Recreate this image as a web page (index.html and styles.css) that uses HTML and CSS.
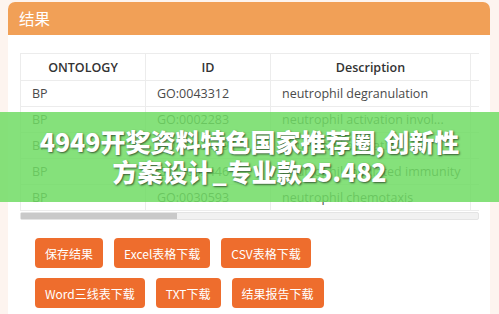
FILE: index.html
```html
<!DOCTYPE html>
<html lang="zh-CN">
<head>
    <meta charset="UTF-8">
    <title>结果</title>
    <link rel="stylesheet" href="styles.css">
</head>
<body>
    <div class="card">
        <div class="card-head">结果</div>
        <div class="card-body">
            <div class="table-wrap">
                <table class="result">
                    <colgroup>
                        <col class="c-onto">
                        <col class="c-id">
                        <col class="c-desc">
                        <col class="c-more">
                        <col class="c-more">
                        <col class="c-more">
                    </colgroup>
                    <thead>
                        <tr>
                            <th>ONTOLOGY</th>
                            <th>ID</th>
                            <th>Description</th>
                            <th></th>
                            <th></th>
                            <th></th>
                        </tr>
                    </thead>
                    <tbody>
                        <tr><td>BP</td><td>GO:0043312</td><td>neutrophil degranulation</td><td></td><td></td><td></td></tr>
                        <tr><td>BP</td><td>GO:0002283</td><td>neutrophil activation invol...</td><td></td><td></td><td></td></tr>
                        <tr><td>BP</td><td>GO:0042119</td><td>neutrophil activation</td><td></td><td></td><td></td></tr>
                        <tr><td>BP</td><td>GO:0002446</td><td>neutrophil mediated immunity</td><td></td><td></td><td></td></tr>
                        <tr><td>BP</td><td>GO:0030593</td><td>neutrophil chemotaxis</td><td></td><td></td><td></td></tr>
                    </tbody>
                </table>
            </div>
            <div class="scrollbar"><div class="thumb"></div></div>
            <div class="actions">
                <button class="btn">保存结果</button>
                <button class="btn">Excel表格下载</button>
                <button class="btn">CSV表格下载</button>
            </div>
            <div class="actions">
                <button class="btn">Word三线表下载</button>
                <button class="btn">TXT下载</button>
                <button class="btn">结果报告下载</button>
            </div>
        </div>
    </div>
    <div class="banner">
        <div class="banner-text">4949开奖资料特色国家推荐圈,创新性<br>方案设计_专业款25.482</div>
    </div>
</body>
</html>
```

FILE: styles.css
```css
body {
    margin: 0;
    padding: 2px 9px 0 8px;
    background: #fdf4ef;
    font-family: "Open Sans", "Noto Sans CJK SC", sans-serif;
    height: 312px;
    overflow: hidden;
}
.card {
    background: #fff;
    border-radius: 7px 7px 0 0;
    height: 312px;
}
.card-head {
    height: 33px;
    line-height: 32px;
    padding-left: 11px;
    background: #f1a057;
    color: #fff;
    font-family: "Noto Sans CJK SC", sans-serif;
    font-size: 15.5px;
    border-radius: 7px 7px 0 0;
}
.card-body {
    padding: 18px 11px 0 12px;
}
.table-wrap {
    overflow: hidden;
}
.result {
    border-collapse: collapse;
    table-layout: fixed;
    width: 1350px;
    font-size: 12.5px;
    color: #4a4a4a;
}
.c-onto { width: 125px; }
.c-id { width: 125px; }
.c-desc { width: 200px; }
.c-more { width: 300px; }
.result th,
.result td {
    border: 1px solid #ececec;
    height: 25px;
    padding: 0 11px;
    text-align: left;
    white-space: nowrap;
    overflow: hidden;
}
.result th {
    height: 26px;
    text-align: center;
    font-weight: 600;
    font-size: 12.5px;
    color: #333;
}
.scrollbar {
    height: 6px;
    margin-top: 1px;
    background: #f1f1f1;
    border: 1px solid #e4e4e4;
    border-radius: 2px;
}
.thumb {
    width: 156px;
    height: 6px;
    background: #c9c9c9;
}
.actions {
    display: flex;
    gap: 11px;
    padding-left: 15px;
    margin-top: 18px;
}
.actions + .actions {
    margin-top: 10px;
}
.btn {
    height: 30px;
    padding: 0 10px;
    border: none;
    border-radius: 4px;
    background: #ee6d2d;
    color: #fff;
    font-family: "Noto Sans CJK SC", sans-serif;
    font-size: 12px;
}
.banner {
    position: absolute;
    left: 0;
    top: 112px;
    width: 100%;
    height: 90px;
    background: rgba(112, 220, 100, 0.85);
}
.banner-text {
    padding-top: 14px;
    text-align: center;
    color: #fff;
    font-family: "Noto Sans CJK SC", sans-serif;
    font-weight: 900;
    font-size: 25px;
    line-height: 30px;
    text-shadow: 1px 1px 2px rgba(0, 0, 0, 0.6);
}
```
